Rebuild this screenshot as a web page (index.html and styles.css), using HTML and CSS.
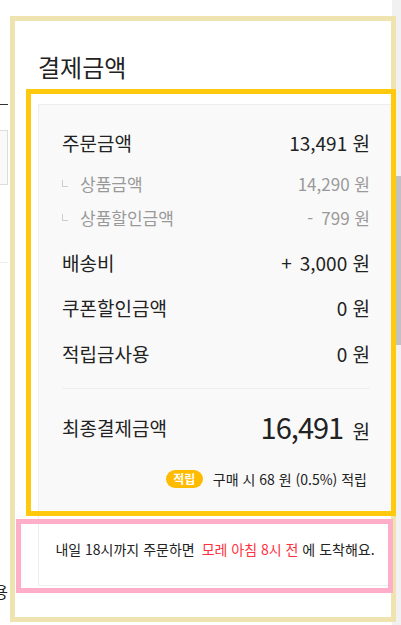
FILE: index.html
```html
<!DOCTYPE html>
<html lang="ko">
<head>
<meta charset="utf-8">
<title>결제금액</title>
<link rel="stylesheet" href="styles.css">
</head>
<body>
<div class="page">
  <aside class="side">
    <div class="side-rule"></div>
    <div class="side-box"></div>
    <div class="side-line"></div>
    <div class="side-text"><span>적립금사용</span></div>
  </aside>

  <main class="main">
    <h2 class="title">결제금액</h2>

    <section class="summary">
      <div class="row">
        <span class="label">주문금액</span>
        <span class="value">13,491 원</span>
      </div>
      <div class="subs">
        <div class="sub">
          <span class="label"><i class="mark"></i>상품금액</span>
          <span class="value">14,290 원</span>
        </div>
        <div class="sub">
          <span class="label"><i class="mark"></i>상품할인금액</span>
          <span class="value"><span class="sign">-</span>799 원</span>
        </div>
      </div>
      <div class="row">
        <span class="label">배송비</span>
        <span class="value"><span class="sign">+</span>3,000 원</span>
      </div>
      <div class="row">
        <span class="label">쿠폰할인금액</span>
        <span class="value">0 원</span>
      </div>
      <div class="row">
        <span class="label">적립금사용</span>
        <span class="value">0 원</span>
      </div>

      <hr class="divider">

      <div class="total">
        <span class="label">최종결제금액</span>
        <span class="total-value"><strong>16,491</strong> 원</span>
      </div>

      <div class="reward">
        <span class="badge">적립</span>
        <span class="reward-text">구매 시 68 원 (0.5%) 적립</span>
      </div>
    </section>

    <section class="delivery">
      <p>내일 18시까지 주문하면 <em>모레 아침 8시 전</em> 에 도착해요.</p>
    </section>
  </main>

  <div class="scrollbar"><div class="thumb"></div></div>

  <div class="note note-beige"></div>
  <div class="note note-gold"></div>
  <div class="note note-pink"></div>
</div>
</body>
</html>
```

FILE: styles.css
```css
html, body {
  margin: 0;
  padding: 0;
  background: #fff;
}

body {
  font-family: "Noto Sans CJK KR", "Noto Sans", sans-serif;
  color: #222;
}

.page {
  position: relative;
  width: 401px;
  height: 625px;
  overflow: hidden;
  display: flex;
}

/* partially visible left column */
.side {
  flex: none;
  width: 8px;
  overflow: hidden;
  padding-top: 104px;
  display: flex;
  flex-direction: column;
}

.side-rule {
  height: 1px;
  background: #333;
}

.side-box {
  margin-top: 25px;
  height: 53px;
  border: 1px solid #ddd;
  border-left: 0;
  background: #f9f9f9;
}

.side-line {
  margin-top: 77px;
  height: 1px;
  background: #eee;
}

.side-text {
  margin-top: 318px;
  display: flex;
  justify-content: flex-end;
  font-size: 16px;
  line-height: 20px;
  white-space: nowrap;
}

.side-text span {
  flex: none;
}

/* main column */
.main {
  flex: none;
  width: 354px;
  margin-left: 30px;
  padding-top: 52px;
}

.title {
  margin: 0 0 22px 0;
  font-size: 24px;
  line-height: 30px;
  font-weight: 400;
  color: #222;
}

.summary {
  background: #f9f9f9;
  border: 1px solid #eee;
  padding: 24px 21px 24px 23px;
}

.row {
  display: flex;
  justify-content: space-between;
  align-items: center;
  font-size: 19px;
  line-height: 27px;
}

.row + .row,
.subs + .row {
  margin-top: 18.5px;
}

.subs {
  margin-top: 16px;
  display: flex;
  flex-direction: column;
  gap: 10px;
}

.sub {
  display: flex;
  justify-content: space-between;
  align-items: center;
  font-size: 17px;
  line-height: 24px;
  color: #999;
}

.sub .label {
  display: flex;
  align-items: center;
}

.mark {
  width: 5px;
  height: 6px;
  margin: -2px 12px 0 0;
  border-left: 1px solid #ccc;
  border-bottom: 1px solid #ccc;
}

.sign {
  margin-right: 8px;
}

.divider {
  margin: 21px 0 0;
  height: 1px;
  border: 0;
  background: #eee;
}

.total {
  margin-top: 19px;
  display: flex;
  justify-content: space-between;
  align-items: center;
  font-size: 19px;
  line-height: 36px;
}

.total-value strong {
  font-size: 29px;
  font-weight: 400;
  letter-spacing: -1px;
  margin-right: 4px;
}

.reward {
  margin-top: 21px;
  padding-right: 3px;
  display: flex;
  justify-content: flex-end;
  align-items: center;
  gap: 10px;
  font-size: 14px;
  line-height: 18px;
}

.badge {
  width: 37px;
  height: 18px;
  border-radius: 9px;
  background: #ffbb00;
  color: #fff;
  font-size: 12px;
  font-weight: 700;
  line-height: 18px;
  text-align: center;
}

.delivery {
  height: 72px;
  border: 1px solid #eee;
  border-top: 0;
  display: flex;
  align-items: center;
  justify-content: center;
}

.delivery p {
  margin: 0;
  font-size: 14px;
  line-height: 18px;
}

.delivery em {
  font-style: normal;
  color: #ff3040;
  margin-left: 3px;
}

/* scrollbar */
.scrollbar {
  flex: none;
  width: 9px;
  background: #f1f1f1;
}

.thumb {
  margin: 176px 0 0 2px;
  height: 169px;
  background: #c1c1c1;
}

/* annotation outlines drawn over the page */
.note {
  position: absolute;
  box-sizing: border-box;
  border: 5px solid;
}

.note-beige {
  left: 10px;
  top: 16px;
  width: 386px;
  height: 606px;
  border-color: #efe4b0;
}

.note-gold {
  left: 26px;
  top: 89px;
  width: 370px;
  height: 427px;
  border-color: #ffc90e;
}

.note-pink {
  left: 16px;
  top: 519px;
  width: 377px;
  height: 74px;
  border-color: #ffaec9;
}
```
